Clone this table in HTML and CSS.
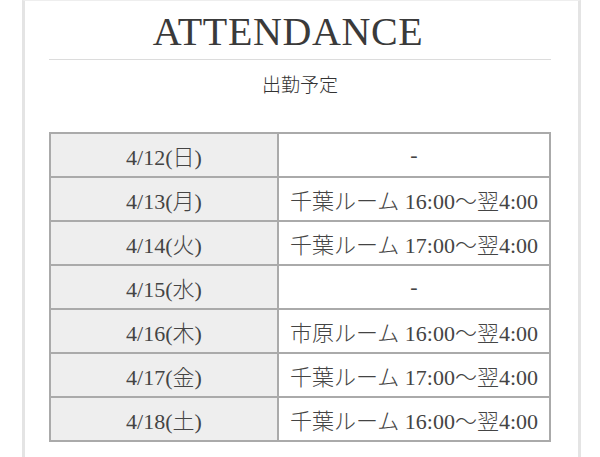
FILE: index.html
```html
<!DOCTYPE html>
<html lang="ja">
<head>
<meta charset="utf-8">
<link rel="stylesheet" href="styles.css">
</head>
<body>
<div class="card">
  <h2 class="title">Attendance</h2>
  <div class="rule"></div>
  <p class="sub">出勤予定</p>
  <table class="sched">
    <tr><th>4/12(日)</th><td>-</td></tr>
    <tr><th>4/13(月)</th><td>千葉ルーム 16:00〜翌4:00</td></tr>
    <tr><th>4/14(火)</th><td>千葉ルーム 17:00〜翌4:00</td></tr>
    <tr><th>4/15(水)</th><td>-</td></tr>
    <tr><th>4/16(木)</th><td>市原ルーム 16:00〜翌4:00</td></tr>
    <tr><th>4/17(金)</th><td>千葉ルーム 17:00〜翌4:00</td></tr>
    <tr><th>4/18(土)</th><td>千葉ルーム 16:00〜翌4:00</td></tr>
  </table>
</div>
</body>
</html>
```
FILE: styles.css
```css
html, body {
  margin: 0;
  padding: 0;
  background: #fff;
}
body {
  font-family: "Liberation Serif", "Noto Sans CJK JP", serif;
  color: #444;
}
.card {
  margin-left: 22px;
  width: 559px;
  min-height: 470px;
  border-left: 3px solid #e4e4e4;
  border-right: 3px solid #e4e4e4;
  border-top: 1px solid #eee;
  padding: 0 27px 0 24px;
  box-sizing: border-box;
}
.title {
  margin: 0;
  padding: 9px 24px 0 0;
  height: 58px;
  line-height: 44px;
  font-weight: normal;
  font-size: 40px;
  text-transform: uppercase;
  letter-spacing: 0.6px;
  text-align: center;
  color: #3a3a3a;
  box-sizing: border-box;
}
.rule {
  height: 1px;
  background: #dcdcdc;
}
.sub {
  margin: 12px 0 0;
  line-height: 24px;
  font-size: 19px;
  text-align: center;
  color: #333;
  font-family: "Noto Sans CJK JP", sans-serif;
  font-weight: 300;
}
.sched {
  margin-top: 36px;
  width: 502px;
  border-collapse: collapse;
  font-size: 22px;
  font-weight: 300;
  table-layout: fixed;
}
.sched th, .sched td {
  border: 2px solid #aaa;
  height: 42px;
  padding: 0;
  text-align: center;
  font-weight: 300;
  white-space: nowrap;
}
.sched th {
  width: 226px;
  background: #eee;
}
.sched td {
  background: #fff;
}
```
